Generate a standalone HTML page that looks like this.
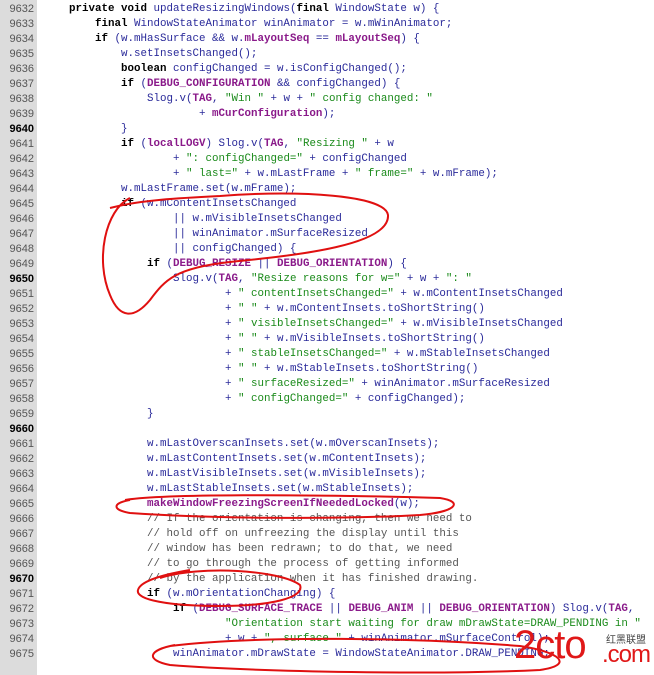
<!DOCTYPE html>
<html><head><meta charset="utf-8"><style>
html,body{margin:0;padding:0;background:#fff;width:654px;height:675px;overflow:hidden;position:relative}
.g{position:absolute;left:0;top:0;width:37px;height:675px;background:#dcdcdc}
.n{position:absolute;left:0;top:2px;width:37px;font:11px/15px "Liberation Sans",sans-serif;color:#555;text-align:right}
.n div{padding-right:3px}
pre{position:absolute;left:43px;top:2px;margin:0;font:10.83px/15px "Liberation Mono",monospace;color:#2a2a9a;white-space:pre}
b{color:#000}
.c{color:#8a1a8a;font-weight:bold}
.s{color:#1a8a1a}
.m{color:#555}
svg{position:absolute;left:0;top:0}
</style></head><body>
<div class="g"></div>
<div class="n"><div>9632</div><div>9633</div><div>9634</div><div>9635</div><div>9636</div><div>9637</div><div>9638</div><div>9639</div><div><b>9640</b></div><div>9641</div><div>9642</div><div>9643</div><div>9644</div><div>9645</div><div>9646</div><div>9647</div><div>9648</div><div>9649</div><div><b>9650</b></div><div>9651</div><div>9652</div><div>9653</div><div>9654</div><div>9655</div><div>9656</div><div>9657</div><div>9658</div><div>9659</div><div><b>9660</b></div><div>9661</div><div>9662</div><div>9663</div><div>9664</div><div>9665</div><div>9666</div><div>9667</div><div>9668</div><div>9669</div><div><b>9670</b></div><div>9671</div><div>9672</div><div>9673</div><div>9674</div><div>9675</div></div>
<pre>    <b>private void</b> updateResizingWindows(<b>final</b> WindowState w) {
        <b>final</b> WindowStateAnimator winAnimator = w.mWinAnimator;
        <b>if</b> (w.mHasSurface &amp;&amp; w.<span class="c">mLayoutSeq</span> == <span class="c">mLayoutSeq</span>) {
            w.setInsetsChanged();
            <b>boolean</b> configChanged = w.isConfigChanged();
            <b>if</b> (<span class="c">DEBUG_CONFIGURATION</span> &amp;&amp; configChanged) {
                Slog.v(<span class="c">TAG</span>, <span class="s">"Win "</span> + w + <span class="s">" config changed: "</span>
                        + <span class="c">mCurConfiguration</span>);
            }
            <b>if</b> (<span class="c">localLOGV</span>) Slog.v(<span class="c">TAG</span>, <span class="s">"Resizing "</span> + w
                    + <span class="s">": configChanged="</span> + configChanged
                    + <span class="s">" last="</span> + w.mLastFrame + <span class="s">" frame="</span> + w.mFrame);
            w.mLastFrame.set(w.mFrame);
            <b>if</b> (w.mContentInsetsChanged
                    || w.mVisibleInsetsChanged
                    || winAnimator.mSurfaceResized
                    || configChanged) {
                <b>if</b> (<span class="c">DEBUG_RESIZE</span> || <span class="c">DEBUG_ORIENTATION</span>) {
                    Slog.v(<span class="c">TAG</span>, <span class="s">"Resize reasons for w="</span> + w + <span class="s">": "</span>
                            + <span class="s">" contentInsetsChanged="</span> + w.mContentInsetsChanged
                            + <span class="s">" "</span> + w.mContentInsets.toShortString()
                            + <span class="s">" visibleInsetsChanged="</span> + w.mVisibleInsetsChanged
                            + <span class="s">" "</span> + w.mVisibleInsets.toShortString()
                            + <span class="s">" stableInsetsChanged="</span> + w.mStableInsetsChanged
                            + <span class="s">" "</span> + w.mStableInsets.toShortString()
                            + <span class="s">" surfaceResized="</span> + winAnimator.mSurfaceResized
                            + <span class="s">" configChanged="</span> + configChanged);
                }

                w.mLastOverscanInsets.set(w.mOverscanInsets);
                w.mLastContentInsets.set(w.mContentInsets);
                w.mLastVisibleInsets.set(w.mVisibleInsets);
                w.mLastStableInsets.set(w.mStableInsets);
                <span class="c">makeWindowFreezingScreenIfNeededLocked</span>(w);
                <span class="m">// If the orientation is changing, then we need to</span>
                <span class="m">// hold off on unfreezing the display until this</span>
                <span class="m">// window has been redrawn; to do that, we need</span>
                <span class="m">// to go through the process of getting informed</span>
                <span class="m">// by the application when it has finished drawing.</span>
                <b>if</b> (w.mOrientationChanging) {
                    <b>if</b> (<span class="c">DEBUG_SURFACE_TRACE</span> || <span class="c">DEBUG_ANIM</span> || <span class="c">DEBUG_ORIENTATION</span>) Slog.v(<span class="c">TAG</span>,
                            <span class="s">"Orientation start waiting for draw mDrawState=DRAW_PENDING in "</span>
                            + w + <span class="s">", surface "</span> + winAnimator.mSurfaceControl);
                    winAnimator.mDrawState = WindowStateAnimator.DRAW_PENDING;
</pre>
<svg width="654" height="675" fill="none" stroke="#e01010" stroke-width="2">
<path d="M130 198 C105 210 95 260 110 295 C120 320 135 318 150 300 C165 280 175 268 230 262 C300 255 390 245 388 215 C385 195 300 190 220 196 C180 198 140 200 110 208"/>
<path d="M125 500 C160 494 300 494 440 498 C465 502 455 512 420 515 C330 520 200 518 130 513 C112 510 112 503 130 500"/>
<path d="M160 578 C200 565 280 570 300 585 C305 598 270 606 220 606 C170 606 135 600 138 590 C140 582 160 575 190 570"/>
<path d="M170 646 C260 635 420 638 520 646 C560 652 575 665 540 670 C440 675 260 672 170 665 C145 660 148 650 175 645"/>
</svg>
<div style="position:absolute;left:514px;top:625px;font:40px/1 'Liberation Sans',sans-serif;color:#e01818;letter-spacing:-1px">2cto</div>
<div style="position:absolute;left:606px;top:636px;font:10px/1 'Liberation Sans','Noto Sans CJK SC',sans-serif;color:#444">红黑联盟</div>
<div style="position:absolute;left:602px;top:643px;font:24px/1 'Liberation Sans',sans-serif;color:#e01818;letter-spacing:-1px">.com</div>
</body></html>
